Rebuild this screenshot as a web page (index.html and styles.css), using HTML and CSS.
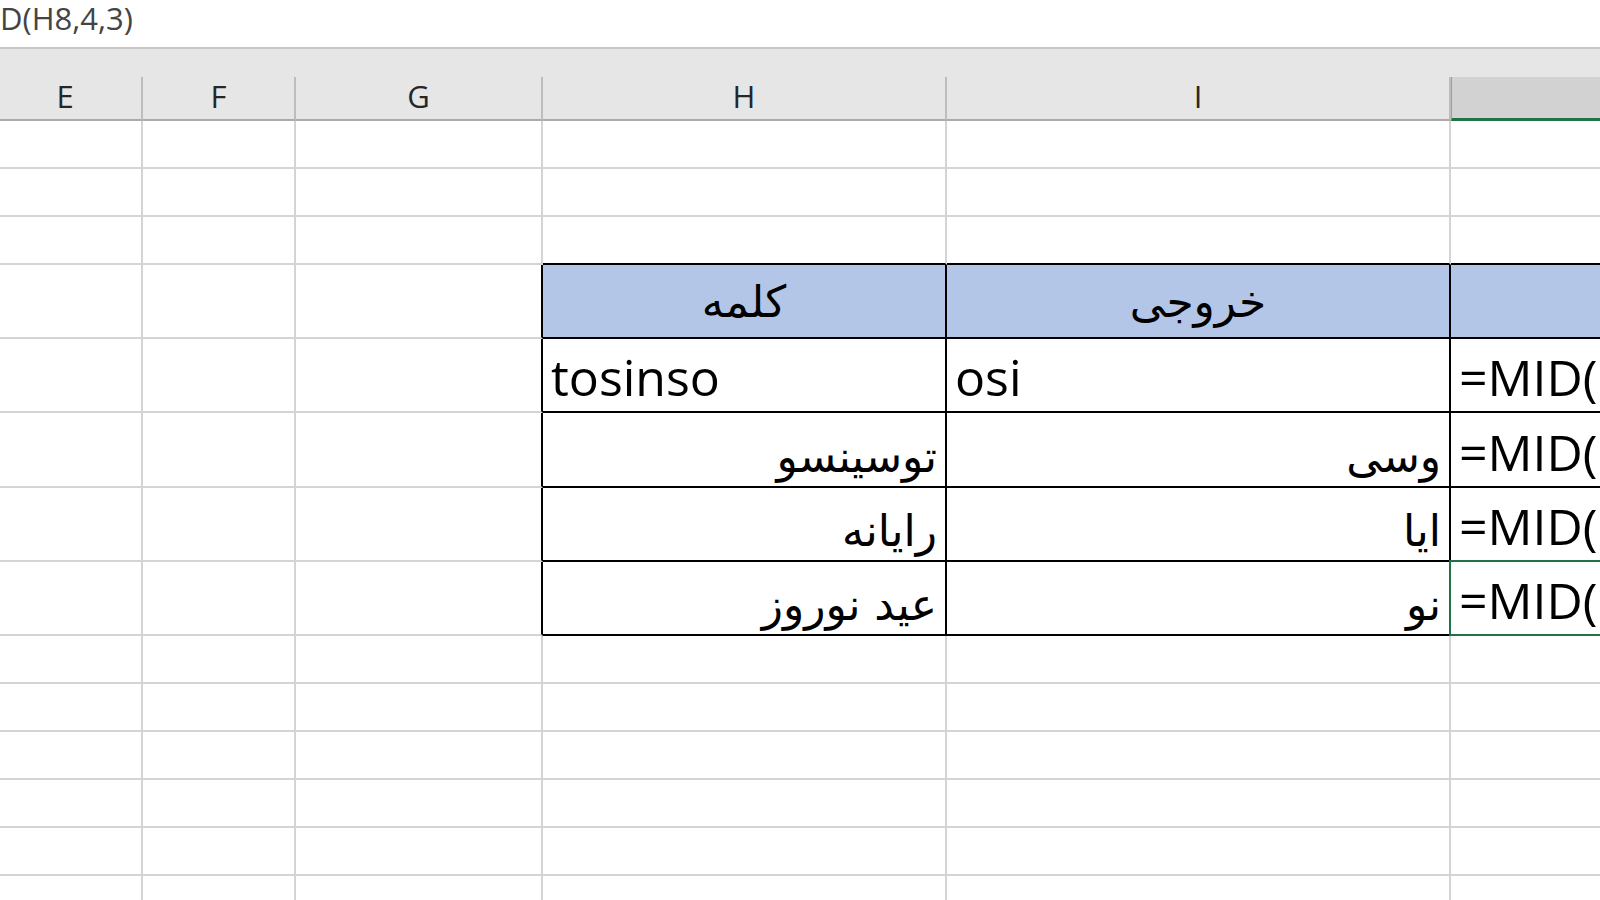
FILE: index.html
```html
<!DOCTYPE html>
<html lang="fa">
<head>
  <meta charset="UTF-8" />
  <title>MID - Excel</title>
  <link rel="stylesheet" href="styles.css">
</head>
<body>
  <div class="formula-bar">D(H8,4,3)</div>

  <div class="col-head">
    <div class="hcell col-e">E</div>
    <div class="hcell">F</div>
    <div class="hcell">G</div>
    <div class="hcell">H</div>
    <div class="hcell">I</div>
    <div class="hcell sel"></div>
  </div>

  <div class="sheet">
    <div class="row">
      <div class="cell"></div><div class="cell"></div><div class="cell"></div>
      <div class="cell"></div><div class="cell"></div><div class="cell"></div>
    </div>
    <div class="row">
      <div class="cell"></div><div class="cell"></div><div class="cell"></div>
      <div class="cell"></div><div class="cell"></div><div class="cell"></div>
    </div>
    <div class="row">
      <div class="cell"></div><div class="cell"></div><div class="cell"></div>
      <div class="cell above"></div><div class="cell above"></div><div class="cell above"></div>
    </div>

    <!-- table H7:J11 -->
    <div class="row tall">
      <div class="cell"></div><div class="cell"></div><div class="cell beside"></div>
      <div class="cell tc th fa">کلمه</div>
      <div class="cell tc th fa">خروجی</div>
      <div class="cell tc th"></div>
    </div>
    <div class="row tall">
      <div class="cell"></div><div class="cell"></div><div class="cell beside"></div>
      <div class="cell tc">tosinso</div>
      <div class="cell tc">osi</div>
      <div class="cell tc">=MID(H8,4,3)</div>
    </div>
    <div class="row tall">
      <div class="cell"></div><div class="cell"></div><div class="cell beside"></div>
      <div class="cell tc fa">توسینسو</div>
      <div class="cell tc fa">وسی</div>
      <div class="cell tc">=MID(H9,2,3)</div>
    </div>
    <div class="row tall">
      <div class="cell"></div><div class="cell"></div><div class="cell beside"></div>
      <div class="cell tc fa">رایانه</div>
      <div class="cell tc fa">ایا</div>
      <div class="cell tc">=MID(H10,2,3)</div>
    </div>
    <div class="row tall">
      <div class="cell"></div><div class="cell"></div><div class="cell beside"></div>
      <div class="cell tc fa">عید نوروز</div>
      <div class="cell tc fa">نو</div>
      <div class="cell tc active">=MID(H11,5,2)</div>
    </div>

    <div class="row">
      <div class="cell"></div><div class="cell"></div><div class="cell"></div>
      <div class="cell"></div><div class="cell"></div><div class="cell"></div>
    </div>
    <div class="row">
      <div class="cell"></div><div class="cell"></div><div class="cell"></div>
      <div class="cell"></div><div class="cell"></div><div class="cell"></div>
    </div>
    <div class="row">
      <div class="cell"></div><div class="cell"></div><div class="cell"></div>
      <div class="cell"></div><div class="cell"></div><div class="cell"></div>
    </div>
    <div class="row">
      <div class="cell"></div><div class="cell"></div><div class="cell"></div>
      <div class="cell"></div><div class="cell"></div><div class="cell"></div>
    </div>
    <div class="row">
      <div class="cell"></div><div class="cell"></div><div class="cell"></div>
      <div class="cell"></div><div class="cell"></div><div class="cell"></div>
    </div>
    <div class="row">
      <div class="cell"></div><div class="cell"></div><div class="cell"></div>
      <div class="cell"></div><div class="cell"></div><div class="cell"></div>
    </div>
  </div>
</body>
</html>
```

FILE: styles.css
```css
* {
  box-sizing: border-box;
}

body {
  margin: 0;
  width: 1600px;
  height: 900px;
  overflow: hidden;
  background: #fff;
  font-family: "Open Sans", "DejaVu Sans", sans-serif;
  color: #000;
}

.formula-bar {
  height: 49px;
  border-bottom: 2px solid #c8c8c8;
  font-size: 31px;
  line-height: 36px;
  color: #444;
  white-space: nowrap;
}

/* column J runs on past the window edge */
.col-head,
.row {
  display: grid;
  grid-template-columns: 143px 153px 247px 404px 504px 320px;
}

.col-head {
  height: 72px;
  background: #e6e6e6;
  align-items: end;
}

.hcell {
  height: 44px;
  border-right: 2px solid #bdbdbd;
  border-bottom: 2px solid #ababab;
  display: flex;
  align-items: center;
  justify-content: center;
  padding-bottom: 4px;
  font-size: 31px;
  color: #262626;
}

.hcell.col-e {
  padding-right: 11px;
}

.hcell.sel {
  background: #d2d2d2;
  border-left: 1px solid #9e9e9e;
  border-bottom: 3px solid #217346;
}

.row {
  height: 48px;
}

.row.tall {
  height: 74.2px;
}

.cell {
  border-right: 2px solid #d4d4d4;
  border-bottom: 2px solid #d4d4d4;
}

.cell.above {
  border-bottom-color: #000;
}

.cell.beside {
  border-right-color: #000;
}

.tc {
  border-color: #000;
  display: flex;
  align-items: flex-end;
  padding: 0 8px;
  overflow: hidden;
  white-space: nowrap;
  font-size: 50px;
}

.fa {
  direction: rtl;
  font-family: "DejaVu Sans", sans-serif;
  font-size: 44px;
  padding-bottom: 4px;
}

.th {
  background: #b4c6e7;
  justify-content: center;
  align-items: center;
  padding-bottom: 0;
}

.active {
  position: relative;
  overflow: visible;
}

.active::after {
  content: "";
  position: absolute;
  top: -2px;
  left: -2px;
  right: 0;
  bottom: -2px;
  border: 2px solid #217346;
  z-index: 1;
}
```
